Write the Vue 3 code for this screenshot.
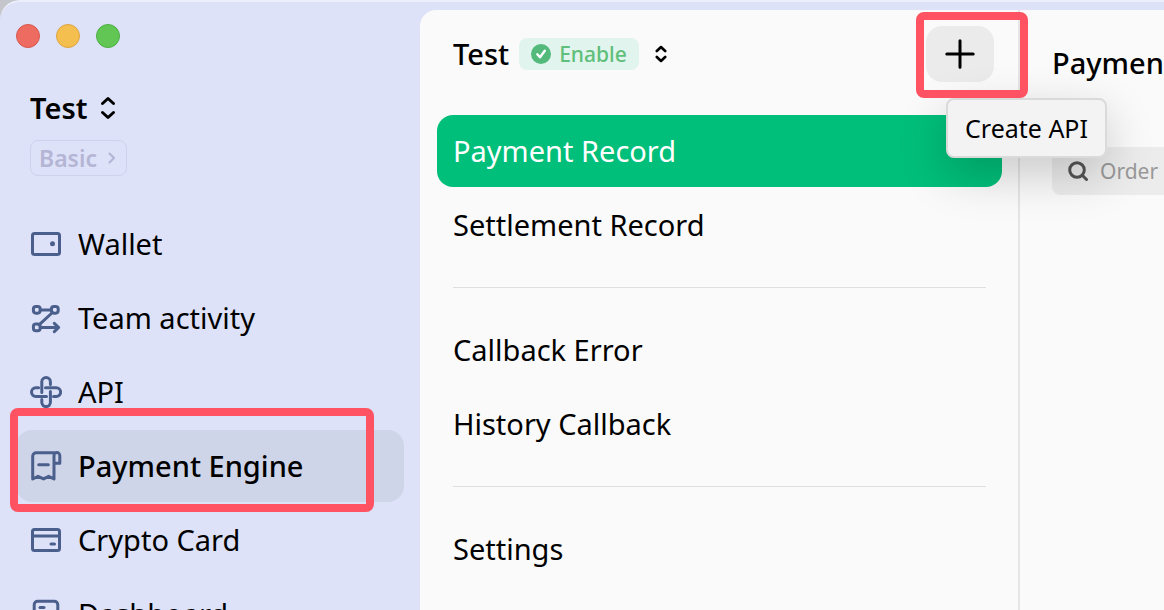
<script setup>
import { ref } from 'vue'

const active = ref('Payment Engine')
const section = ref('Payment Record')
const order = ref('')
const nav = ['Wallet', 'Team activity', 'API', 'Payment Engine', 'Crypto Card', 'Dashboard']
const groups = [['Payment Record', 'Settlement Record'], ['Callback Error', 'History Callback'], ['Settings']]
</script>

<template>
  <div class="desktop">
    <div class="window">
      <aside class="sidebar">
        <div class="lights">
          <button class="light red" aria-label="Close"></button>
          <button class="light yellow" aria-label="Minimize"></button>
          <button class="light green" aria-label="Zoom"></button>
        </div>
        <button class="team">
          Test
          <svg width="16" height="24" viewBox="0 0 16 24" class="arrows"><path d="M2.500 7.500 8 2.500l5.500 5M2.500 16.500l5.500 5 5.500-5" /></svg>
        </button>
        <button class="plan">
          Basic
          <svg width="8" height="12" viewBox="0 0 8 12"><path d="M1.500 1.500 6 6l-4.500 4.500" /></svg>
        </button>
        <nav class="nav">
          <a v-for="name in nav" :key="name" href="#" class="nav-item" :class="{ active: active === name }" @click.prevent="active = name">
            <svg class="icon" width="32" height="32" viewBox="0 0 32 32">
              <template v-if="name === 'Wallet'">
                <rect x="2.500" y="5.500" width="27" height="21" rx="2" />
                <circle cx="22.500" cy="15.800" r="2.500" class="fill" />
              </template>
              <template v-else-if="name === 'Team activity'">
                <rect x="3.400" y="4.400" width="6.800" height="6.800" rx="2.600" />
                <rect x="21.400" y="4.400" width="6.800" height="6.800" rx="2.600" />
                <rect x="3.400" y="22" width="6.800" height="6.800" rx="2.600" />
                <path d="M10.200 8h11.200M22.500 10.500 9 22.800M10.200 25.500h18.300M24.300 21.300l4.400 4.200-4.400 4.200" />
              </template>
              <template v-else-if="name === 'API'">
                <path d="M11.800 16.500V5.800a4.200 4.200 0 0 1 8.600 0v2.800M15.500 11.800h10.800a4.200 4.200 0 0 1 0 8.600h-2.800M20.400 15.500v10.800a4.200 4.200 0 0 1-8.600 0v-2.800M16.500 20.400H5.800a4.200 4.200 0 0 1 0-8.600h2.800" />
              </template>
              <template v-else-if="name === 'Payment Engine'">
                <path d="M27 2.700H6.200a3.500 3.500 0 0 0-3.500 3.500V29L8 26.300l5.500 2.600 5.200-2.600L24 29V5.500a2.800 2.800 0 0 1 5.800 0v7.800H24M8.700 14.700h9.600" />
              </template>
              <template v-else-if="name === 'Crypto Card'">
                <rect x="2.500" y="5.500" width="27" height="21" rx="2" />
                <path d="M2.500 12h27M21 20h3.500" />
              </template>
              <template v-else>
                <rect x="4.200" y="3.200" width="23.600" height="26" rx="3.500" />
                <path d="M10 9.500h4" />
              </template>
            </svg>
            <span>{{ name }}</span>
          </a>
        </nav>
      </aside>

      <main class="content">
        <section class="menu">
          <header class="menu-head">
            <h1>Test</h1>
            <span class="badge">
              <svg width="20" height="20" viewBox="0 0 20 20"><circle cx="10" cy="10" r="10" /><path d="m6.300 10.300 2.700 3 4.800-6.500" /></svg>
              Enable
            </span>
            <button class="switch" aria-label="Switch application">
              <svg width="12" height="18" viewBox="0 0 12 18" class="arrows small"><path d="m1.800 6 4.200-4 4.200 4M1.800 12 6 16l4.200-4" /></svg>
            </button>
            <div class="create">
              <button class="plus" aria-label="Create API">
                <svg width="30" height="30" viewBox="0 0 30 30"><path d="M15 1.800v26.400M1.800 15h26.400" /></svg>
              </button>
              <span class="tooltip" role="tooltip">Create API</span>
              <span class="mark"></span>
            </div>
          </header>
          <nav>
            <template v-for="(group, i) in groups" :key="i">
              <hr v-if="i" />
              <a v-for="name in group" :key="name" href="#" class="menu-item" :class="{ current: section === name }" @click.prevent="section = name">{{ name }}</a>
            </template>
          </nav>
        </section>

        <section class="detail">
          <h2>Payment Record</h2>
          <label class="search">
            <svg width="20" height="20" viewBox="0 0 20 20"><circle cx="9" cy="9" r="7.300" /><path d="m14.500 14.500 4 4" /></svg>
            <input v-model="order" type="text" placeholder="Order number" aria-label="Order number" />
          </label>
        </section>
      </main>
    </div>
  </div>
</template>

<style>
body { margin: 0; }
</style>

<style scoped>
* { box-sizing: border-box; }
.desktop {
  height: 100vh;
  overflow: hidden;
  background: #c4c6cb;
  font-family: "Noto Sans", sans-serif;
  font-size: 29px;
  line-height: 40px;
  color: #000;
}
button { padding: 0; border: 0; background: none; font: inherit; color: inherit; }
a { color: inherit; text-decoration: none; }
svg { flex: none; fill: none; stroke: currentColor; stroke-linecap: round; stroke-linejoin: round; }
.window {
  display: flex;
  height: 100%;
  background: #dde2f8;
  border-top: 2px solid #eceffb;
  border-top-left-radius: 20px;
}
.sidebar { flex: none; width: 420px; padding: 22px 16px 0; }
.lights { display: flex; gap: 16px; }
.light { width: 24px; height: 24px; border: 1px solid; border-radius: 50%; }
.red { background: #ed6b60; border-color: #d9584e; }
.yellow { background: #f5bf50; border-color: #dca540; }
.green { background: #62c655; border-color: #4eae43; }
.team { display: flex; align-items: center; gap: 12px; margin: 40px 0 0 14px; font-weight: 600; }
.arrows { stroke-width: 3; }
.small { stroke-width: 2.6; }
.plan {
  display: flex;
  align-items: center;
  gap: 11px;
  height: 36px;
  margin: 12px 0 0 14px;
  padding: 0 10px 0 8px;
  border: 1px solid #cfd2ec;
  border-radius: 8px;
  font-size: 23px;
  font-weight: 600;
  color: #b5b5d5;
}
.plan svg { stroke-width: 2; }
.nav { display: flex; flex-direction: column; gap: 2px; margin-top: 32px; }
.nav-item {
  position: relative;
  flex: none;
  display: flex;
  align-items: center;
  gap: 16px;
  height: 72px;
  padding: 0 14px;
  border-radius: 16px;
}
.icon { color: #4b5f8c; stroke-width: 3; }
.icon .fill { fill: currentColor; stroke: none; }
.active { background: #cfd5e8; font-weight: 500; }
.active::after {
  content: "";
  position: absolute;
  inset: -22px 30px -10px -6px;
  border: 8px solid #ff5364;
  border-radius: 8px;
}
.content {
  flex: 1;
  min-width: 0;
  display: flex;
  margin-top: 8px;
  overflow: hidden;
  background: #fafafa;
  border-top-left-radius: 16px;
}
.menu { flex: none; width: 600px; padding: 16px 16px 0 17px; border-right: 2px solid #e5e5e5; }
.menu-head { display: flex; align-items: center; height: 56px; padding: 0 8px 0 16px; margin-bottom: 33px; }
h1, h2 { margin: 0; font-size: 29px; font-weight: 500; }
.badge {
  display: flex;
  align-items: center;
  gap: 8px;
  height: 32px;
  margin-left: 10px;
  padding: 0 12px;
  border-radius: 8px;
  background: #e1f4ed;
  font-size: 21px;
  font-weight: 500;
  color: #5fbf7b;
}
.badge circle { fill: #54ba7b; stroke: none; }
.badge path { stroke: #fff; stroke-width: 2.4; }
.switch { display: flex; margin-left: 16px; }
.create { position: relative; z-index: 1; margin-left: auto; }
.plus {
  display: flex;
  align-items: center;
  justify-content: center;
  width: 68px;
  height: 56px;
  border-radius: 16px;
  background: #ebebeb;
}
.plus svg { stroke-width: 3; }
.mark {
  position: absolute;
  inset: -14px -34px -16px -10px;
  border: 8px solid #ff5364;
  border-radius: 8px;
  pointer-events: none;
}
.tooltip {
  position: absolute;
  top: 72px;
  left: 20px;
  padding: 8px 17px;
  border: 2px solid #dadada;
  border-radius: 8px;
  background: #f3f3f3;
  box-shadow: 0 16px 48px rgba(0, 0, 0, 0.2);
  font-size: 25px;
  white-space: nowrap;
}
.menu-item { display: flex; align-items: center; height: 72px; margin-bottom: 2px; padding: 0 16px; border-radius: 16px; }
.current { background: #00bf7a; color: #fff; }
hr { height: 1px; margin: 26px 16px; border: 0; background: #dfdfdf; }
.detail { flex: 1; min-width: 0; padding: 33px 0 0 32px; }
.detail h2 { white-space: nowrap; }
.search {
  display: flex;
  align-items: center;
  gap: 12px;
  height: 48px;
  margin-top: 64px;
  padding-left: 16px;
  border-radius: 8px 0 0 8px;
  background: #ececec;
}
.search svg { stroke: #555; stroke-width: 3; }
.search input { flex: 1; min-width: 0; padding: 0; border: 0; outline: 0; background: none; font: inherit; font-size: 21px; }
.search input::placeholder { color: #999; opacity: 1; }
</style>
